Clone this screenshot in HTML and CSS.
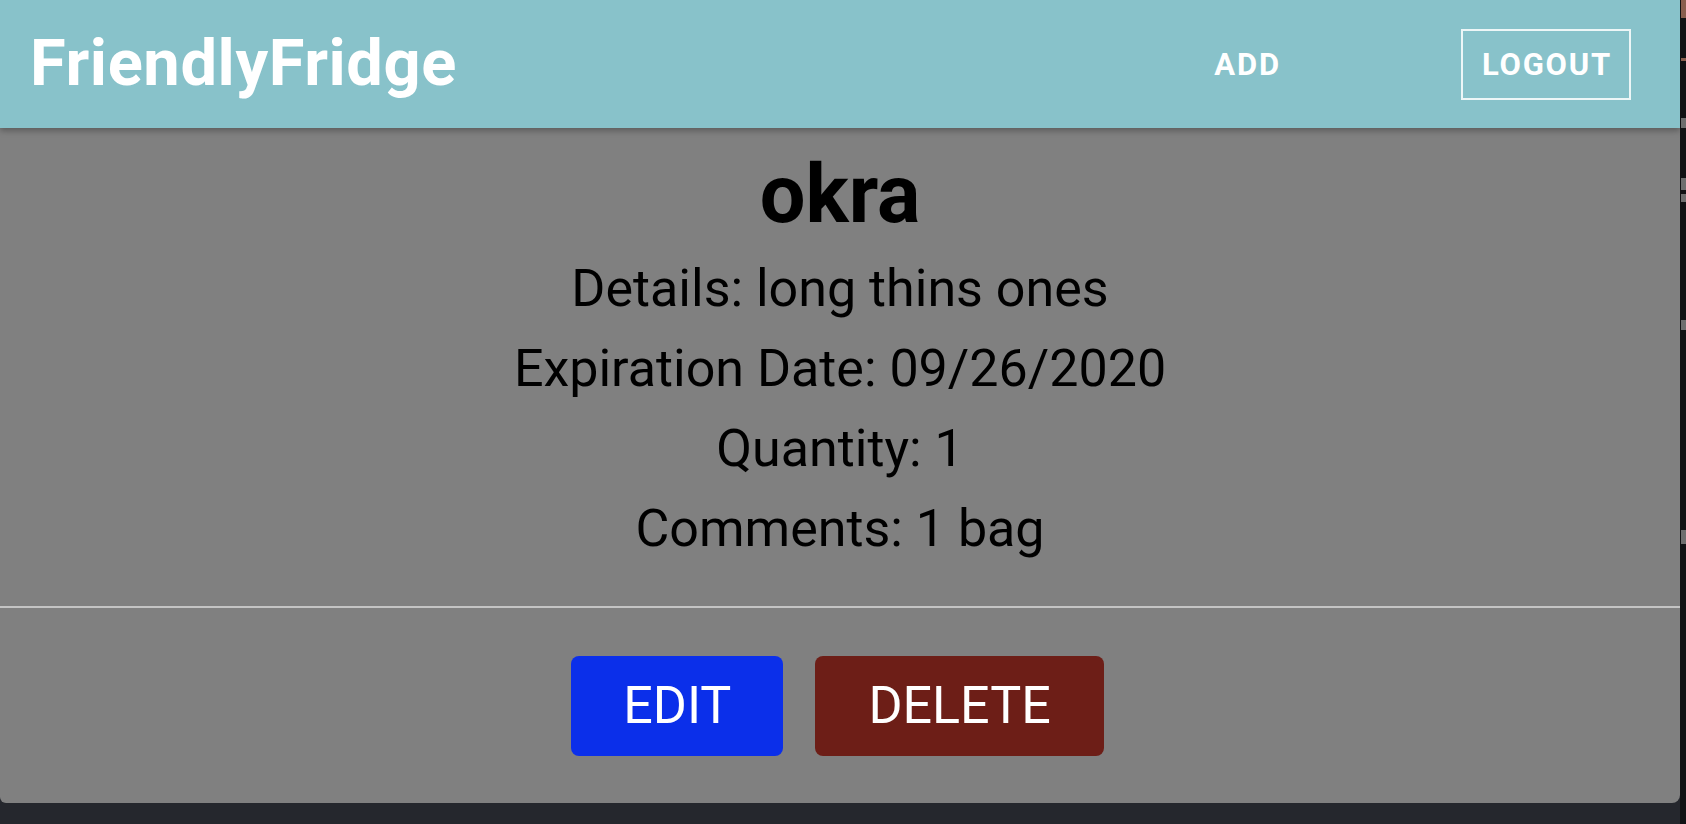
FILE: index.html
```html
<!DOCTYPE html>
<html lang="en">
<head>
<meta charset="utf-8">
<title>FriendlyFridge</title>
<link rel="stylesheet" href="styles.css">
</head>
<body>
<div class="screen">
  <div class="window">
    <header class="appbar">
      <div class="brand">FriendlyFridge</div>
      <nav class="nav">
        <a class="nav-link">ADD</a>
        <a class="nav-link nav-outlined">LOGOUT</a>
      </nav>
    </header>
    <main class="item">
      <section class="item-body">
        <h1 class="item-name">okra</h1>
        <div class="item-line">Details: long thins ones</div>
        <div class="item-line">Expiration Date: 09/26/2020</div>
        <div class="item-line">Quantity: 1</div>
        <div class="item-line">Comments: 1 bag</div>
      </section>
      <hr class="divider">
      <section class="item-actions">
        <button class="btn btn-edit">EDIT</button>
        <button class="btn btn-delete">DELETE</button>
      </section>
    </main>
  </div>
  <div class="edge">
    <span class="edge-mark edge-brown edge-m1"></span>
    <span class="edge-mark edge-brown edge-m2"></span>
    <span class="edge-mark edge-grey edge-m3"></span>
    <span class="edge-mark edge-grey edge-m4"></span>
    <span class="edge-mark edge-grey edge-m5"></span>
    <span class="edge-mark edge-grey edge-m6"></span>
    <span class="edge-mark edge-grey edge-m7"></span>
  </div>
</div>
</body>
</html>
```
FILE: styles.css
```css
html, body {
  margin: 0;
  padding: 0;
}

body {
  background: #25272d;
  width: 1686px;
  height: 824px;
  overflow: hidden;
  font-family: Roboto, "Liberation Sans", sans-serif;
}

.screen {
  display: flex;
  align-items: flex-start;
  height: 824px;
}

.window {
  width: 1680px;
  height: 803px;
  background: #808080;
  border-radius: 0 0 8px 6px;
  overflow: hidden;
  display: flex;
  flex-direction: column;
}

.appbar {
  height: 128px;
  flex: none;
  background: #88c2ca;
  box-shadow: 0 3px 6px rgba(0, 0, 0, 0.28);
  display: flex;
  align-items: center;
  justify-content: space-between;
  padding: 0 49px 0 30px;
  position: relative;
  z-index: 1;
  color: #ffffff;
}

.brand {
  font-weight: 700;
  font-size: 65px;
  letter-spacing: 0.6px;
  line-height: 1;
  margin-top: -2px;
}

.nav {
  display: flex;
  align-items: center;
  gap: 180px;
}

.nav-link {
  font-weight: 700;
  font-size: 31px;
  letter-spacing: 1.8px;
  line-height: 1;
  color: #ffffff;
}

.nav-outlined {
  border: 2px solid rgba(255, 255, 255, 0.85);
  padding: 18px 17px 18px 19px;
}

.item {
  flex: 1;
  display: flex;
  flex-direction: column;
}

.item-body {
  padding: 20px 0 37px;
  text-align: center;
  color: #000000;
}

.item-name {
  margin: 0 0 7px;
  font-size: 81px;
  font-weight: 700;
  line-height: 94px;
}

.item-line {
  font-size: 52px;
  line-height: 80px;
}

.divider {
  margin: 0;
  border: none;
  height: 2px;
  background: #c4c4c4;
}

.item-actions {
  display: flex;
  justify-content: center;
  gap: 32px;
  padding: 48px 5px 47px 0;
}

.btn {
  height: 100px;
  padding: 0 52px;
  border: none;
  border-radius: 8px;
  color: #ffffff;
  font-family: Roboto, "Liberation Sans", sans-serif;
  font-size: 52px;
  font-weight: 400;
  line-height: 1;
}

.btn-edit {
  background: #0b2fea;
}

.btn-delete {
  background: #6d1e17;
  padding: 0 53px;
}

.edge {
  width: 6px;
  height: 824px;
  background: #111214;
  display: flex;
  flex-direction: column;
}

.edge-mark {
  display: block;
  width: 5px;
  margin-left: 1px;
}

.edge-brown {
  background: #8a5e4e;
}

.edge-grey {
  background: #6e6e6e;
}

.edge-m1 { height: 18px; margin-top: 0; }
.edge-m2 { height: 3px; margin-top: 40px; }
.edge-m3 { height: 10px; margin-top: 57px; }
.edge-m4 { height: 12px; margin-top: 50px; }
.edge-m5 { height: 8px; margin-top: 4px; }
.edge-m6 { height: 10px; margin-top: 118px; }
.edge-m7 { height: 14px; margin-top: 200px; }
```
